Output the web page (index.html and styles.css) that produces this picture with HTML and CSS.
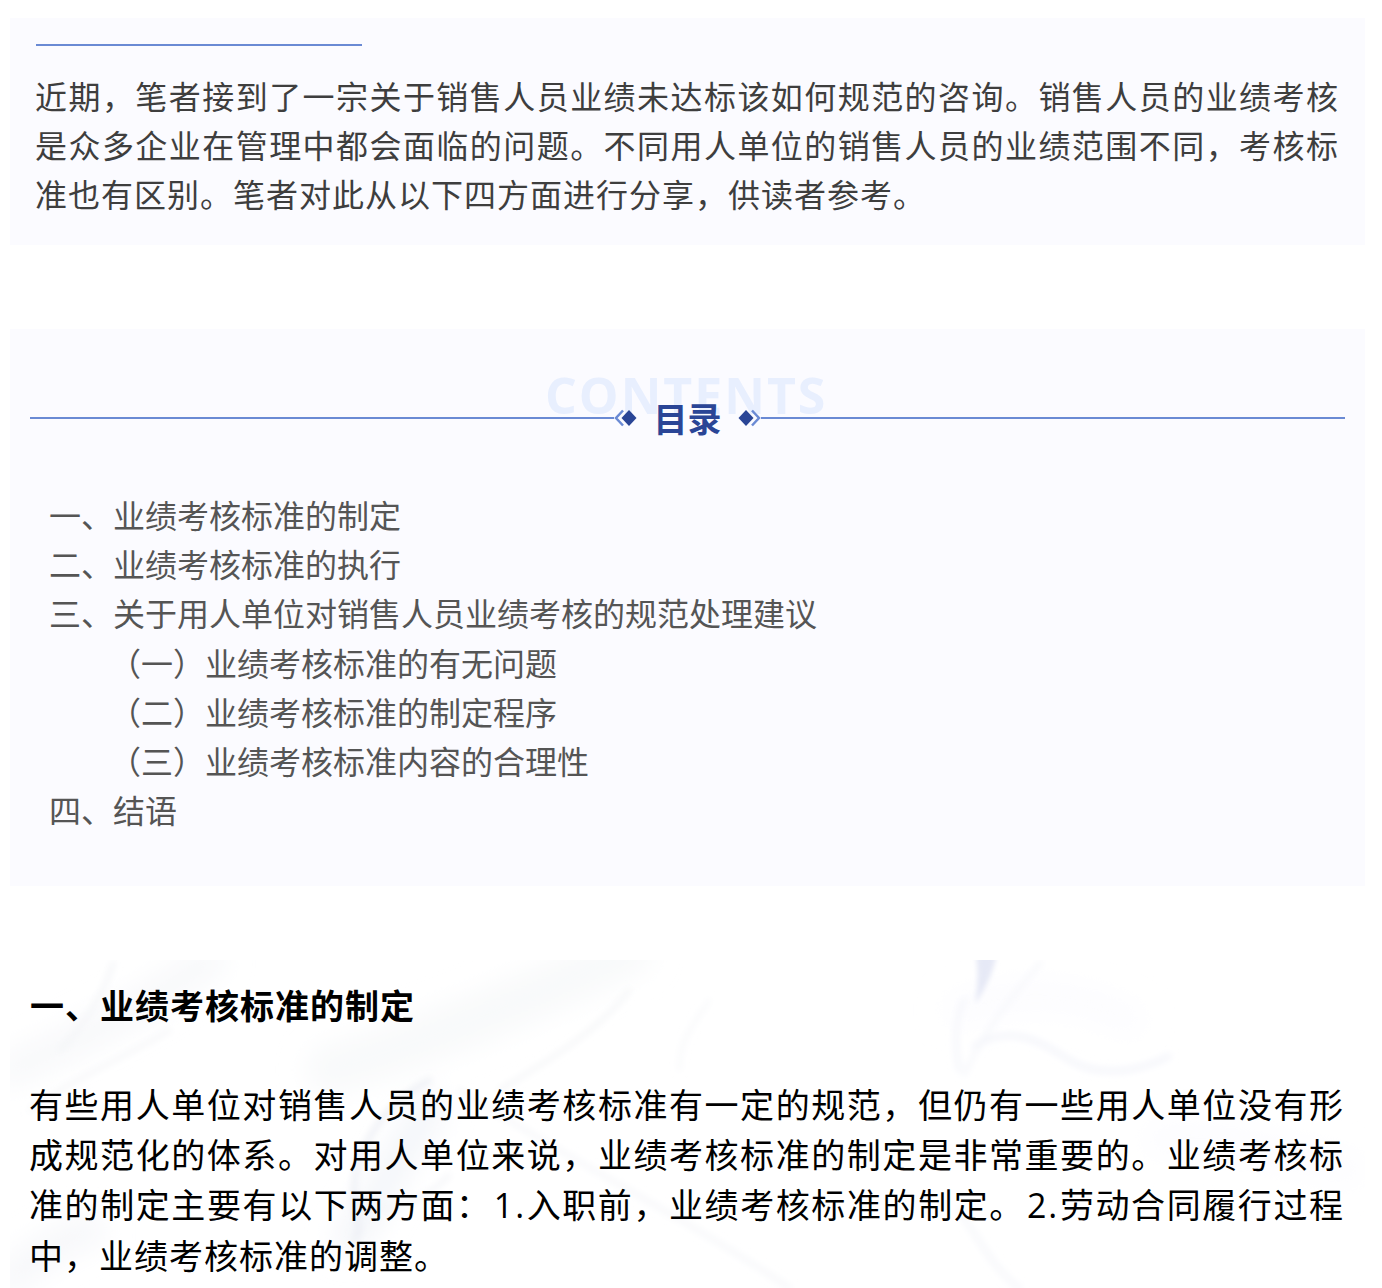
FILE: index.html
```html
<!DOCTYPE html>
<html lang="zh-CN">
<head>
<meta charset="utf-8">
<title>销售人员业绩考核</title>
<link rel="stylesheet" href="styles.css">
</head>
<body>
<section class="card intro">
  <div class="intro-rule"></div>
  <p class="intro-text">近期，笔者接到了一宗关于销售人员业绩未达标该如何规范的咨询。销售人员的业绩考核是众多企业在管理中都会面临的问题。不同用人单位的销售人员的业绩范围不同，考核标准也有区别。笔者对此从以下四方面进行分享，供读者参考。</p>
</section>
<section class="card toc">
  <div class="toc-head">
    <span class="toc-ghost">CONTENTS</span>
    <span class="toc-line"></span>
    <svg class="toc-mark" width="24" height="20" viewBox="0 0 24 20"><path d="M9 2.500 2 10l7 7.500" fill="none" stroke="#6a8ad4" stroke-width="2.500"/><path d="M15 2l7.500 8-7.500 8-7.500-8z" fill="#2a4596"/></svg>
    <h2 class="toc-title">目录</h2>
    <svg class="toc-mark" width="24" height="20" viewBox="0 0 24 20"><path d="M15 2.500 22 10l-7 7.500" fill="none" stroke="#6a8ad4" stroke-width="2.500"/><path d="M9 2l7.500 8-7.500 8-7.500-8z" fill="#2a4596"/></svg>
    <span class="toc-line"></span>
  </div>
  <ul class="toc-list">
    <li>一、业绩考核标准的制定</li>
    <li>二、业绩考核标准的执行</li>
    <li>三、关于用人单位对销售人员业绩考核的规范处理建议</li>
    <li class="sub">（一）业绩考核标准的有无问题</li>
    <li class="sub">（二）业绩考核标准的制定程序</li>
    <li class="sub">（三）业绩考核标准内容的合理性</li>
    <li>四、结语</li>
  </ul>
</section>
<section class="article">
  <svg class="marble" viewBox="0 0 1356 328" preserveAspectRatio="none" aria-hidden="true">
    <defs>
      <filter id="soft" x="-10%" y="-10%" width="120%" height="120%"><feGaussianBlur stdDeviation="3.500"/></filter>
      <filter id="tight" x="-30%" y="-30%" width="160%" height="160%"><feGaussianBlur stdDeviation="2.500"/></filter>
      <filter id="wide" x="-20%" y="-20%" width="140%" height="140%"><feGaussianBlur stdDeviation="14"/></filter>
      <clipPath id="frame"><rect width="1356" height="328"/></clipPath>
    </defs>
    <g clip-path="url(#frame)">
      <g filter="url(#wide)" fill="none" stroke-linecap="round">
        <path d="M0 110C70 80 130 50 200 0" stroke="#f7f8fa" stroke-width="30"/>
        <path d="M320 110C420 80 520 40 620 -10" stroke="#f8f9fa" stroke-width="46"/>
        <path d="M340 280C370 240 390 190 420 150" stroke="#f3f5f9" stroke-width="30"/>
        <path d="M950 50C1010 30 1060 30 1120 60" stroke="#fcfcfe" stroke-width="30"/>
        <path d="M0 320C20 300 50 280 80 270" stroke="#f6f7fa" stroke-width="30"/>
        <path d="M1150 180C1200 170 1260 190 1340 210" stroke="#fcfcfe" stroke-width="30"/>
      </g>
      <path filter="url(#tight)" d="M966 -8H988C984 14 975 30 966 44C968 28 970 12 966 -8z" fill="#e6e9f6"/>
      <g filter="url(#soft)" fill="none" stroke-linecap="round">
        <path d="M955 40C945 60 945 85 950 110" stroke="#f5f6fb" stroke-width="5"/>
        <path d="M1032 2C1000 40 975 70 955 115" stroke="#f6f7fb" stroke-width="4"/>
        <path d="M965 86C1000 64 1030 80 1060 100C1090 118 1130 112 1160 96" stroke="#f3f4fa" stroke-width="5"/>
        <path d="M104 2C95 30 80 60 50 90" stroke="#f3f4f7" stroke-width="4"/>
        <path d="M20 150C60 120 110 100 160 70" stroke="#f5f6f8" stroke-width="4"/>
        <path d="M420 120C365 150 340 200 345 245C348 262 352 270 345 280" stroke="#eceef4" stroke-width="5"/>
        <path d="M345 245C375 255 410 245 440 215" stroke="#f4f5f8" stroke-width="4"/>
        <path d="M620 30C590 70 540 100 490 130" stroke="#f4f5f7" stroke-width="4"/>
        <path d="M700 40C680 70 670 80 670 110" stroke="#f6f7f9" stroke-width="3"/>
        <path d="M450 130C560 200 680 260 780 328" stroke="#f7f8fa" stroke-width="5"/>
        <path d="M950 250C970 280 985 310 1010 328" stroke="#f7f8fb" stroke-width="6"/>
      </g>
    </g>
  </svg>
  <h2 class="article-title">一、业绩考核标准的制定</h2>
  <p class="article-text">有些用人单位对销售人员的业绩考核标准有一定的规范，但仍有一些用人单位没有形成规范化的体系。对用人单位来说，业绩考核标准的制定是非常重要的。业绩考核标准的制定主要有以下两方面：<span class="num">1.</span>入职前，业绩考核标准的制定。<span class="num">2.</span>劳动合同履行过程中，业绩考核标准的调整。</p>
</section>
</body>
</html>
```
FILE: styles.css
```css
* {
  box-sizing: border-box;
}
html, body {
  margin: 0;
  padding: 0;
  background: #fff;
}
body {
  width: 1382px;
  height: 1288px;
  overflow: hidden;
  padding: 18px 17px 0 10px;
  font-family: "Noto Sans CJK SC", "Noto Sans", sans-serif;
}
p, h2, ul {
  margin: 0;
  padding: 0;
}
.card {
  background: #fbfbff;
}
.intro {
  height: 227px;
  padding: 26px 26px 0;
}
.intro-rule {
  width: 326px;
  height: 2px;
  background: #6a8ad4;
}
.intro-text {
  margin: 25px 0 0 -1px;
  font-size: 32px;
  line-height: 49px;
  letter-spacing: 1px;
  text-align: justify;
  color: #3e3e3e;
}
.toc {
  height: 557px;
  margin-top: 84px;
  padding: 0 20px;
}
.toc-head {
  position: relative;
  display: flex;
  align-items: center;
  height: 60px;
  top: 59px;
}
.toc-ghost {
  position: absolute;
  left: 515px;
  top: -23px;
  font-family: "Open Sans", sans-serif;
  font-size: 50px;
  font-weight: 700;
  line-height: 60px;
  letter-spacing: 2px;
  color: #e8effe;
}
.toc-line {
  flex: 1;
  height: 2px;
  background: #6a8ad4;
}
.toc-mark {
  position: relative;
  flex: none;
}
.toc-title {
  position: relative;
  padding: 0 15.5px;
  font-size: 34px;
  line-height: 44px;
  font-weight: 700;
  color: #2a4596;
}
.toc-list {
  list-style: none;
  padding: 101px 0 0 19px;
  font-size: 32px;
  line-height: 49.2px;
  color: #555;
}
.toc-list li.sub {
  padding-left: 60px;
}
.article {
  position: relative;
  height: 328px;
  margin-top: 74px;
  padding: 19px 21px 0 20px;
  color: #000;
}
.marble {
  position: absolute;
  left: 0;
  top: 0;
  width: 100%;
  height: 328px;
}
.article-title {
  position: relative;
  font-size: 34px;
  line-height: 52px;
  font-weight: 700;
  letter-spacing: 1px;
}
.article-text {
  position: relative;
  margin: 48px 0 0 -1px;
  font-size: 34px;
  line-height: 50px;
  letter-spacing: 1px;
  text-align: justify;
}
.num {
  padding-left: 2px;
  font-family: "Open Sans", sans-serif;
  letter-spacing: 2px;
}
```
